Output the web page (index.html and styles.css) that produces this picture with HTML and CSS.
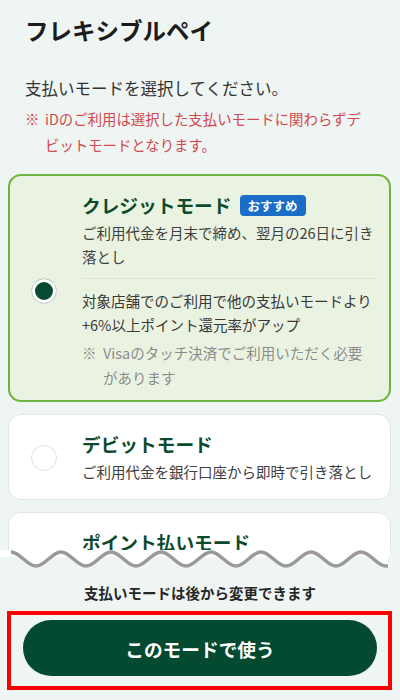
FILE: index.html
```html
<!DOCTYPE html>
<html lang="ja">
<head>
<meta charset="utf-8">
<title>フレキシブルペイ</title>
<link rel="stylesheet" href="styles.css">
</head>
<body>
<div class="screen">
  <main class="content">
    <h1 class="title">フレキシブルペイ</h1>
    <p class="lead">支払いモードを選択してください。</p>
    <div class="notice"><span class="mark">※</span><span class="notice-text">iDのご利用は選択した支払いモードに関わらずデビットモードとなります。</span></div>

    <div class="modes">
      <div class="mode mode--selected">
        <span class="radio radio--on"></span>
        <div class="mode-body">
          <div class="mode-head"><span class="mode-name">クレジットモード</span><span class="badge">おすすめ</span></div>
          <p class="mode-desc">ご利用代金を月末で締め、翌月の26日に引き落とし</p>
          <div class="divider"></div>
          <p class="mode-desc mode-desc--dark">対象店舗でのご利用で他の支払いモードより+6%以上ポイント還元率がアップ</p>
          <div class="sub-note"><span class="sub-mark">※</span><span>Visaのタッチ決済でご利用いただく必要があります</span></div>
        </div>
      </div>

      <div class="mode">
        <span class="radio"></span>
        <div class="mode-body">
          <div class="mode-head"><span class="mode-name">デビットモード</span></div>
          <p class="mode-desc">ご利用代金を銀行口座から即時で引き落とし</p>
        </div>
      </div>

      <div class="mode">
        <span class="radio"></span>
        <div class="mode-body">
          <div class="mode-head"><span class="mode-name">ポイント払いモード</span></div>
          <p class="mode-desc">ご利用代金をポイントで支払い、不足分は銀行口座から即時で引き落とし</p>
        </div>
      </div>
    </div>
  </main>

  <footer class="footer">
    <svg class="cut" width="400" height="20" viewBox="0 0 400 20" aria-hidden="true">
      <rect x="0" y="0" width="390" height="7" fill="#ffffff"/>
      <path d="M11,2 C20.1,2 26.9,16 36,16 S51.9,2 61,2 S76.9,16 86,16 S101.9,2 111,2 S126.9,16 136,16 S151.9,2 161,2 S176.9,16 186,16 S201.9,2 211,2 S226.9,16 236,16 S251.9,2 261,2 S276.9,16 286,16 S301.9,2 311,2 S326.9,16 336,16 S351.9,2 361,2 S376.9,16 386,16 L388,16 V0 H11 Z" fill="#ffffff"/>
      <path d="M11,2 C20.1,2 26.9,16 36,16 S51.9,2 61,2 S76.9,16 86,16 S101.9,2 111,2 S126.9,16 136,16 S151.9,2 161,2 S176.9,16 186,16 S201.9,2 211,2 S226.9,16 236,16 S251.9,2 261,2 S276.9,16 286,16 S301.9,2 311,2 S326.9,16 336,16 S351.9,2 361,2 S376.9,16 386,16 L388,16" fill="none" stroke="#9a9a9a" stroke-width="3.5"/>
    </svg>
    <p class="footer-note">支払いモードは後から変更できます</p>
    <div class="highlight">
      <button class="cta" type="button">このモードで使う</button>
    </div>
  </footer>
</div>
</body>
</html>
```

FILE: styles.css
```css
* {
  box-sizing: border-box;
}

html, body {
  margin: 0;
  padding: 0;
}

body {
  background: #eff5f2;
  font-family: "Noto Sans CJK JP", "Noto Sans", sans-serif;
  color: #333333;
}

.screen {
  width: 400px;
  height: 700px;
  display: flex;
  flex-direction: column;
  overflow: hidden;
}

.content {
  flex: none;
  height: 550px;
  overflow: hidden;
  padding: 14px 9px 0 8px;
}

.title {
  margin: 0 0 0 17px;
  font-size: 23.5px;
  line-height: 32px;
  font-weight: 700;
  color: #1c1c1c;
}

.lead {
  margin: 30px 0 0 17px;
  font-size: 16.5px;
  line-height: 24px;
  color: #333333;
}

.notice {
  margin: 6px 0 0 17px;
  width: 348px;
  display: flex;
  font-size: 14.4px;
  line-height: 26px;
  color: #d3474f;
}

.mark {
  flex: none;
  width: 20px;
}

.notice-text {
  flex: 1;
}

.modes {
  margin-top: 16px;
  display: flex;
  flex-direction: column;
  gap: 12px;
}

.mode {
  display: flex;
  align-items: center;
  gap: 25px;
  background: #ffffff;
  border: 1px solid #e1e7e4;
  border-radius: 13px;
  padding: 16px 14px 15px 22px;
}

.mode--selected {
  background: #eaf3e1;
  border: 2px solid #6cb33f;
  padding: 16px 13px 10px 21px;
}

.radio {
  flex: none;
  width: 26px;
  height: 26px;
  border-radius: 50%;
  background: #ffffff;
  border: 1.5px solid #e2e2e2;
}

.radio--on {
  border: 1px solid #e6e9e7;
  background: #064a31;
  box-shadow: inset 0 0 0 3px #ffffff;
}

.mode-body {
  flex: 1;
  min-width: 0;
}

.mode-head {
  display: flex;
  align-items: center;
  height: 26px;
}

.mode-name {
  font-size: 18.7px;
  line-height: 26px;
  font-weight: 700;
  color: #0c4a2d;
}

.badge {
  margin-left: 8px;
  height: 21px;
  padding: 0 8px;
  border-radius: 4px;
  background: #1a6ec8;
  color: #ffffff;
  font-size: 12.5px;
  line-height: 21px;
  font-weight: 700;
}

.mode-desc {
  margin: 3px 0 0;
  font-size: 14.5px;
  line-height: 24px;
  color: #404040;
}

.divider {
  margin-top: 9px;
  height: 1px;
  background: #d9e2d6;
}

.mode-desc--dark {
  margin-top: 10px;
  color: #383838;
}

.sub-note {
  margin-top: 3px;
  display: flex;
  font-size: 14.5px;
  line-height: 25px;
  color: #8c8c8c;
}

.sub-mark {
  flex: none;
  width: 21px;
}

.footer {
  flex: 1;
  display: flex;
  flex-direction: column;
  align-items: stretch;
}

.cut {
  display: block;
  flex: none;
}

.footer-note {
  margin: 12px 0 0;
  text-align: center;
  font-size: 14.5px;
  line-height: 22px;
  font-weight: 700;
  color: #262626;
}

.highlight {
  margin: 7px 8px 0 7px;
  border: 4px solid #ff0000;
  padding: 5px 11px 10px 12px;
}

.cta {
  display: block;
  width: 100%;
  height: 56px;
  border: none;
  border-radius: 28px;
  background: #034a30;
  color: #ffffff;
  font-family: "Noto Sans CJK JP", "Noto Sans", sans-serif;
  font-size: 18.7px;
  font-weight: 700;
  cursor: pointer;
}
```
